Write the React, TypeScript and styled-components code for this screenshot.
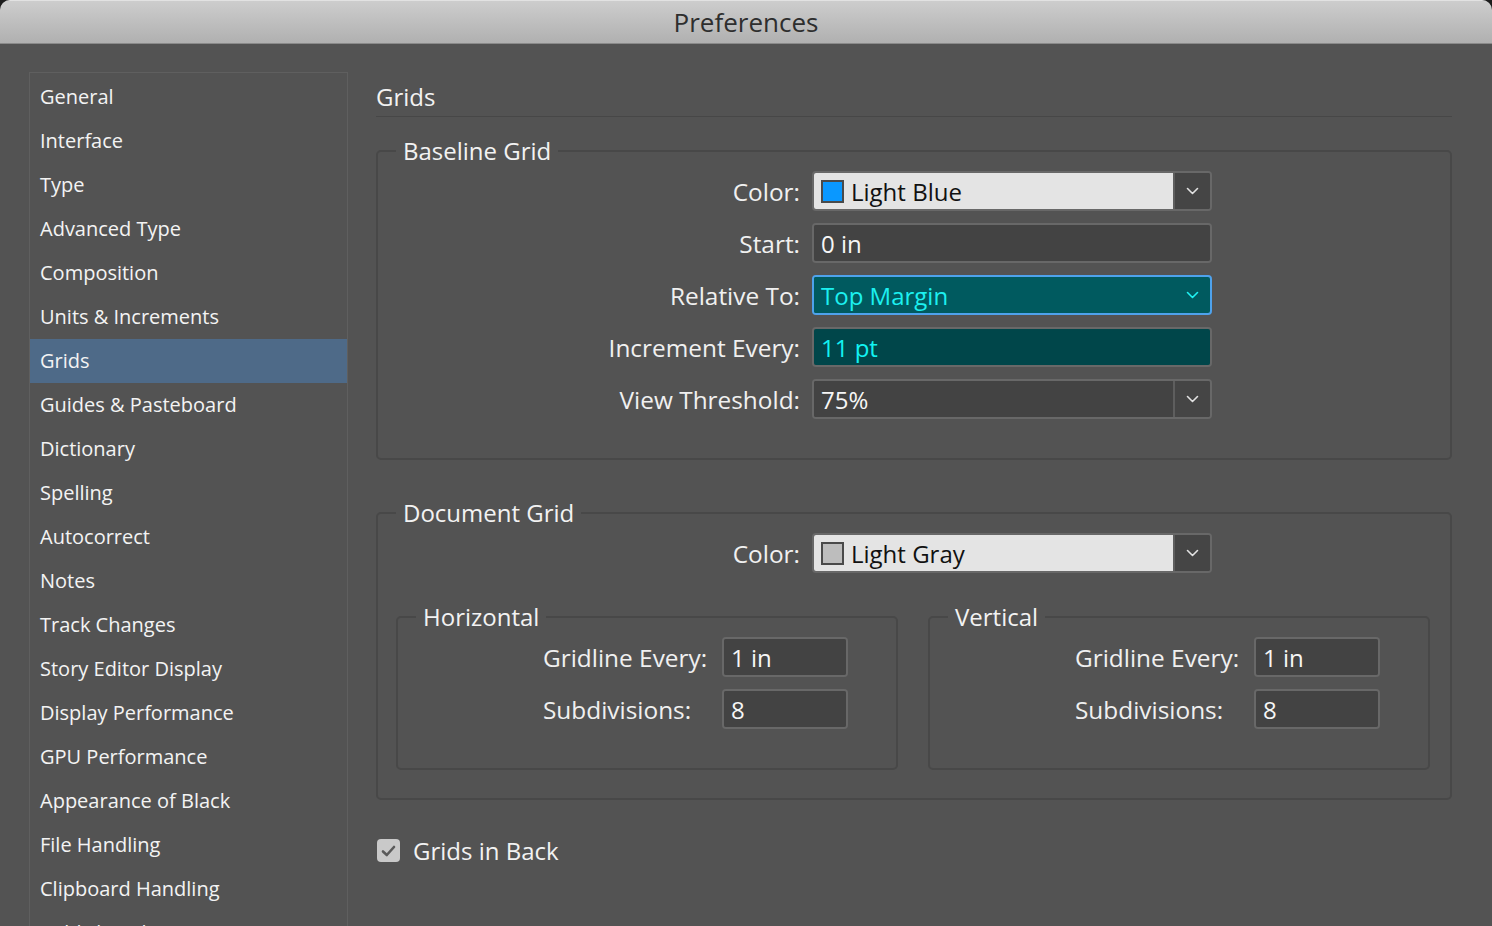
import styled, { createGlobalStyle } from "styled-components";

const GlobalStyle = createGlobalStyle`
  html, body {
    margin: 0;
    padding: 0;
    background: #1c1c1c;
    overflow: hidden;
  }
  body {
    font-family: "Open Sans", "Noto Sans", sans-serif;
    font-weight: 500;
  }
`;

const navItems = [
  "General",
  "Interface",
  "Type",
  "Advanced Type",
  "Composition",
  "Units & Increments",
  "Grids",
  "Guides & Pasteboard",
  "Dictionary",
  "Spelling",
  "Autocorrect",
  "Notes",
  "Track Changes",
  "Story Editor Display",
  "Display Performance",
  "GPU Performance",
  "Appearance of Black",
  "File Handling",
  "Clipboard Handling",
  "Publish Online",
];

type Tone = "plain" | "light" | "focus" | "active";

const Chevron = ({ color }: { color: string }) => (
  <svg width="13" height="8" viewBox="0 0 13 8">
    <polyline
      points="1.5,1.5 6.5,6.5 11.5,1.5"
      fill="none"
      stroke={color}
      strokeWidth="1.6"
      strokeLinecap="round"
      strokeLinejoin="round"
    />
  </svg>
);

const CheckMark = () => (
  <svg width="15" height="12" viewBox="0 0 15 12">
    <polyline
      points="2,6.5 5.8,10 13,2"
      fill="none"
      stroke="#5a5a5a"
      strokeWidth="2.6"
      strokeLinecap="round"
      strokeLinejoin="round"
    />
  </svg>
);

type SelectProps = {
  value: string;
  tone?: Tone;
  swatch?: string;
  divided?: boolean;
};

const Select = ({ value, tone = "plain", swatch, divided = true }: SelectProps) => {
  const arrowColor = tone === "focus" ? "#1ff2f2" : "#e2e2e2";
  return (
    <Field $tone={tone}>
      <Value $tone={tone}>
        {swatch && <Swatch $fill={swatch} />}
        {value}
      </Value>
      <Arrow $divided={divided}>
        <Chevron color={arrowColor} />
      </Arrow>
    </Field>
  );
};

const App = (): JSX.Element => {
  return (
    <>
      <GlobalStyle />
      <Window>
        <TitleBar>Preferences</TitleBar>
        <Body>
          <Sidebar>
            {navItems.map((item) => (
              <NavItem key={item} $active={item === "Grids"}>
                {item}
              </NavItem>
            ))}
          </Sidebar>

          <Main>
            <Heading>Grids</Heading>

            <Group>
              <Legend>Baseline Grid</Legend>
              <Rows>
                <Row>
                  <Label>Color:</Label>
                  <Select value="Light Blue" tone="light" swatch="#0a98ff" />
                </Row>
                <Row>
                  <Label>Start:</Label>
                  <Field $tone="plain">
                    <Value $tone="plain">0 in</Value>
                  </Field>
                </Row>
                <Row>
                  <Label>Relative To:</Label>
                  <Select value="Top Margin" tone="focus" divided={false} />
                </Row>
                <Row>
                  <Label>Increment Every:</Label>
                  <Field $tone="active">
                    <Value $tone="active">11 pt</Value>
                  </Field>
                </Row>
                <Row>
                  <Label>View Threshold:</Label>
                  <Select value="75%" />
                </Row>
              </Rows>
            </Group>

            <Group $spaced>
              <Legend>Document Grid</Legend>
              <Row>
                <Label>Color:</Label>
                <Select value="Light Gray" tone="light" swatch="#bdbdbd" />
              </Row>

              <SubGrid>
                {["Horizontal", "Vertical"].map((name) => (
                  <SubGroup key={name}>
                    <Legend>{name}</Legend>
                    <SubRows>
                      <SubLabel>Gridline Every:</SubLabel>
                      <Field $tone="plain">
                        <Value $tone="plain">1 in</Value>
                      </Field>
                      <SubLabel>Subdivisions:</SubLabel>
                      <Field $tone="plain">
                        <Value $tone="plain">8</Value>
                      </Field>
                    </SubRows>
                  </SubGroup>
                ))}
              </SubGrid>
            </Group>

            <CheckRow>
              <Box>
                <CheckMark />
              </Box>
              Grids in Back
            </CheckRow>
          </Main>
        </Body>
      </Window>
    </>
  );
};

const Window = styled.div`
  width: 1492px;
  height: 926px;
  background: #535353;
  border-radius: 10px 10px 0 0;
  overflow: hidden;
  display: flex;
  flex-direction: column;
`;

const TitleBar = styled.header`
  flex: none;
  box-sizing: border-box;
  height: 44px;
  display: flex;
  align-items: center;
  justify-content: center;
  padding-bottom: 1px;
  background: linear-gradient(#cdcdcd, #b0b0b0);
  border-top: 1px solid #e2e2e2;
  border-bottom: 1px solid #8a8a8a;
  font-size: 26px;
  color: #2e2e2e;
`;

const Body = styled.div`
  flex: 1;
  display: flex;
  gap: 28px;
  padding: 28px 0 0 29px;
`;

const Sidebar = styled.nav`
  flex: none;
  box-sizing: border-box;
  width: 319px;
  padding-top: 2px;
  border: 1px solid #5f5f5f;
  align-self: flex-start;
`;

const NavItem = styled.div<{ $active?: boolean }>`
  height: 44px;
  line-height: 44px;
  padding-left: 10px;
  font-size: 20px;
  color: #f3f3f3;
  white-space: nowrap;
  background: ${(p) => (p.$active ? "#4e6a88" : "transparent")};
`;

const Main = styled.main`
  width: 1076px;
  padding-top: 11px;
`;

const Heading = styled.h1`
  margin: 0;
  font-size: 24px;
  font-weight: 500;
  line-height: 28px;
  padding-bottom: 5px;
  border-bottom: 1px solid #474747;
  color: #f2f2f2;
`;

const Group = styled.fieldset<{ $spaced?: boolean }>`
  margin: ${(p) => (p.$spaced ? "39px" : "20px")} 0 0 0;
  padding: 6px 20px ${(p) => (p.$spaced ? "28px" : "39px")} 18px;
  border: 2px solid #484848;
  border-radius: 5px;
  min-inline-size: 0;
`;

const Legend = styled.legend`
  padding: 0 7px;
  font-size: 24px;
  line-height: 28px;
  color: #f2f2f2;
`;

const Rows = styled.div`
  display: flex;
  flex-direction: column;
  gap: 12px;
`;

const Row = styled.div`
  display: grid;
  grid-template-columns: 404px 400px;
  column-gap: 12px;
  align-items: center;
`;

const Label = styled.span`
  text-align: right;
  font-size: 24.4px;
  color: #f0f0f0;
  white-space: nowrap;
`;

const toneStyles: Record<Tone, { bg: string; border: string; color: string }> = {
  plain: { bg: "#434343", border: "#686868", color: "#f6f6f6" },
  light: { bg: "#e4e4e4", border: "#686868", color: "#111111" },
  focus: { bg: "#005a5f", border: "#4ea2ec", color: "#1cf0f0" },
  active: { bg: "#00464a", border: "#686868", color: "#12f2f2" },
};

const Field = styled.div<{ $tone: Tone }>`
  box-sizing: border-box;
  height: 40px;
  display: flex;
  border: 2px solid ${(p) => toneStyles[p.$tone].border};
  border-radius: 4px;
  overflow: hidden;
  background: ${(p) => (p.$tone === "light" ? "#454545" : toneStyles[p.$tone].bg)};
`;

const Value = styled.div<{ $tone: Tone }>`
  flex: 1;
  display: flex;
  align-items: center;
  gap: 7px;
  padding-left: 7px;
  font-size: 24px;
  color: ${(p) => toneStyles[p.$tone].color};
  background: ${(p) => toneStyles[p.$tone].bg};
  white-space: nowrap;
`;

const Swatch = styled.span<{ $fill: string }>`
  box-sizing: border-box;
  width: 23px;
  height: 23px;
  background: ${(p) => p.$fill};
  border: 2px solid #4a4a4a;
`;

const Arrow = styled.div<{ $divided: boolean }>`
  flex: none;
  width: 35px;
  display: flex;
  align-items: center;
  justify-content: center;
  border-left: ${(p) => (p.$divided ? "2px solid #5e5e5e" : "none")};
  background: ${(p) => (p.$divided ? "#454545" : "transparent")};
`;

const SubGrid = styled.div`
  display: grid;
  grid-template-columns: 502px 502px;
  column-gap: 30px;
  margin-top: 30px;
`;

const SubGroup = styled.fieldset`
  margin: 0;
  padding: 6px 18px 39px 18px;
  border: 2px solid #484848;
  border-radius: 5px;
  min-inline-size: 0;
`;

const SubRows = styled.div`
  display: grid;
  grid-template-columns: 179px 126px;
  row-gap: 12px;
  align-items: center;
  padding-left: 127px;
`;

const SubLabel = styled.span`
  font-size: 24.4px;
  color: #f0f0f0;
  white-space: nowrap;
`;

const CheckRow = styled.label`
  display: flex;
  align-items: center;
  gap: 13px;
  margin: 34px 0 0 1px;
  font-size: 24px;
  color: #f2f2f2;
`;

const Box = styled.span`
  width: 23px;
  height: 23px;
  border-radius: 4px;
  background: #c9c9c9;
  display: flex;
  align-items: center;
  justify-content: center;
`;

export default App;
